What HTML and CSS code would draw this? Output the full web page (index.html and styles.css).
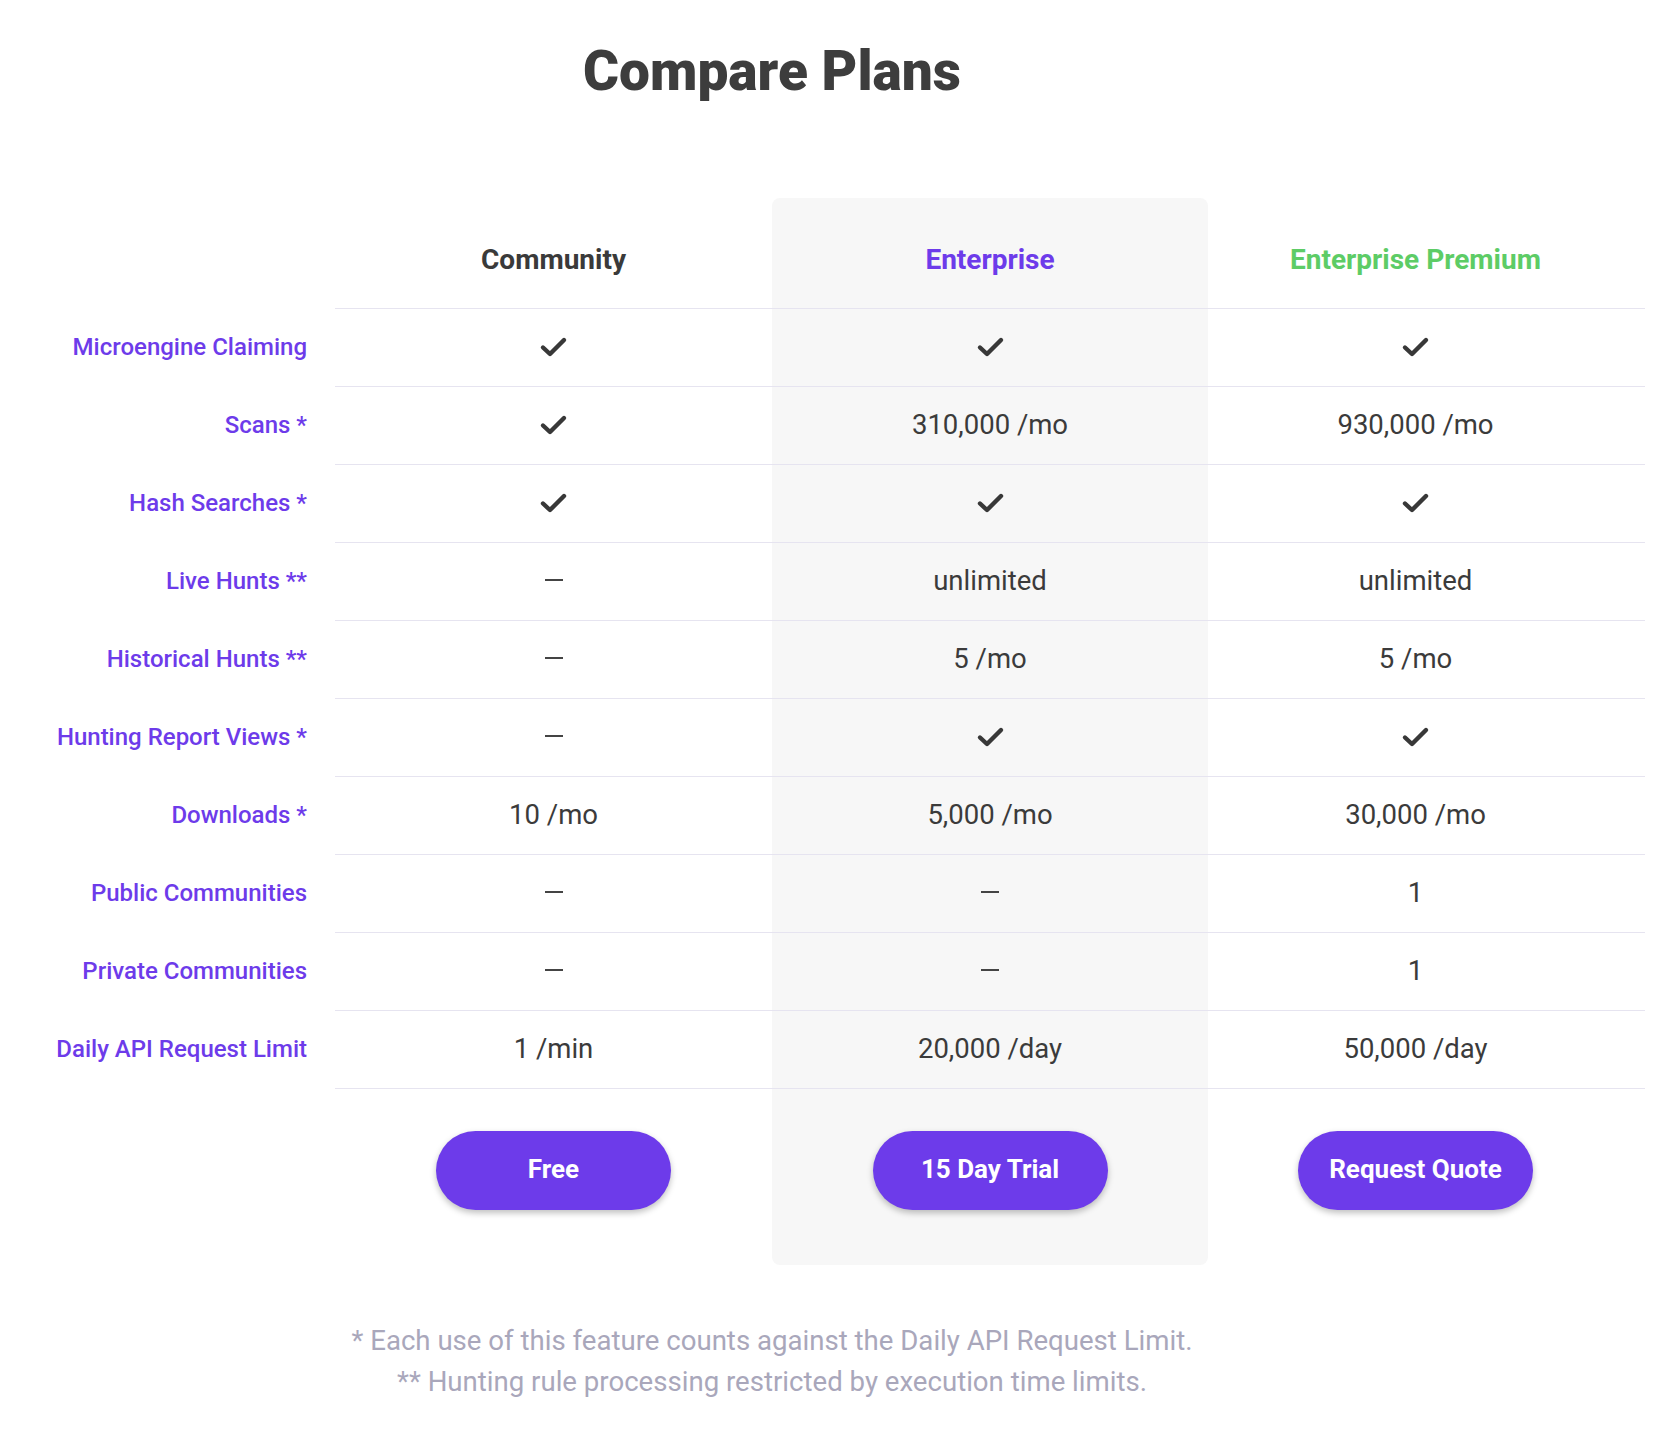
FILE: index.html
```html
<!DOCTYPE html>
<html lang="en">
<head>
<meta charset="utf-8">
<title>Compare Plans</title>
<link rel="stylesheet" href="styles.css">
</head>
<body>
<div class="page">
  <h1 class="title">Compare Plans</h1>

  <div class="plans">
    <div class="label head-label"></div>
    <div class="cell head">Community</div>
    <div class="cell head ent ent-top ent-title">Enterprise</div>
    <div class="cell head prem prem-title">Enterprise Premium</div>

    <div class="label">Microengine Claiming</div>
    <div class="cell"><svg class="check" viewBox="0 0 28 22"><polyline points="3.5,11.5 10.5,18 24.5,4"/></svg></div>
    <div class="cell ent"><svg class="check" viewBox="0 0 28 22"><polyline points="3.5,11.5 10.5,18 24.5,4"/></svg></div>
    <div class="cell prem"><svg class="check" viewBox="0 0 28 22"><polyline points="3.5,11.5 10.5,18 24.5,4"/></svg></div>

    <div class="label">Scans *</div>
    <div class="cell"><svg class="check" viewBox="0 0 28 22"><polyline points="3.5,11.5 10.5,18 24.5,4"/></svg></div>
    <div class="cell ent"><span class="val">310,000 /mo</span></div>
    <div class="cell prem"><span class="val">930,000 /mo</span></div>

    <div class="label">Hash Searches *</div>
    <div class="cell"><svg class="check" viewBox="0 0 28 22"><polyline points="3.5,11.5 10.5,18 24.5,4"/></svg></div>
    <div class="cell ent"><svg class="check" viewBox="0 0 28 22"><polyline points="3.5,11.5 10.5,18 24.5,4"/></svg></div>
    <div class="cell prem"><svg class="check" viewBox="0 0 28 22"><polyline points="3.5,11.5 10.5,18 24.5,4"/></svg></div>

    <div class="label">Live Hunts **</div>
    <div class="cell"><span class="dash"></span></div>
    <div class="cell ent"><span class="val">unlimited</span></div>
    <div class="cell prem"><span class="val">unlimited</span></div>

    <div class="label">Historical Hunts **</div>
    <div class="cell"><span class="dash"></span></div>
    <div class="cell ent"><span class="val">5 /mo</span></div>
    <div class="cell prem"><span class="val">5 /mo</span></div>

    <div class="label">Hunting Report Views *</div>
    <div class="cell"><span class="dash"></span></div>
    <div class="cell ent"><svg class="check" viewBox="0 0 28 22"><polyline points="3.5,11.5 10.5,18 24.5,4"/></svg></div>
    <div class="cell prem"><svg class="check" viewBox="0 0 28 22"><polyline points="3.5,11.5 10.5,18 24.5,4"/></svg></div>

    <div class="label">Downloads *</div>
    <div class="cell"><span class="val">10 /mo</span></div>
    <div class="cell ent"><span class="val">5,000 /mo</span></div>
    <div class="cell prem"><span class="val">30,000 /mo</span></div>

    <div class="label">Public Communities</div>
    <div class="cell"><span class="dash"></span></div>
    <div class="cell ent"><span class="dash"></span></div>
    <div class="cell prem"><span class="val">1</span></div>

    <div class="label">Private Communities</div>
    <div class="cell"><span class="dash"></span></div>
    <div class="cell ent"><span class="dash"></span></div>
    <div class="cell prem"><span class="val">1</span></div>

    <div class="label">Daily API Request Limit</div>
    <div class="cell"><span class="val">1 /min</span></div>
    <div class="cell ent"><span class="val">20,000 /day</span></div>
    <div class="cell prem"><span class="val">50,000 /day</span></div>

    <div class="label foot-label"></div>
    <div class="cell foot"><a class="btn" href="#">Free</a></div>
    <div class="cell foot ent ent-bottom"><a class="btn" href="#">15 Day Trial</a></div>
    <div class="cell foot prem"><a class="btn" href="#">Request Quote</a></div>
  </div>

  <div class="notes">
    <p>* Each use of this feature counts against the Daily API Request Limit.</p>
    <p>** Hunting rule processing restricted by execution time limits.</p>
  </div>
</div>
</body>
</html>
```

FILE: styles.css
```css
* {
  box-sizing: border-box;
}

html, body {
  margin: 0;
  padding: 0;
  background: #ffffff;
}

body {
  font-family: Roboto, "Liberation Sans", sans-serif;
  color: #3b3b3b;
}

.page {
  padding: 42px 0 40px 8px;
}

.title {
  width: 1528px;
  margin: 0;
  font-size: 55px;
  line-height: 58px;
  font-weight: 900;
  color: #3d3d3d;
  text-align: center;
}

.plans {
  margin-top: 98px;
  display: grid;
  grid-template-columns: 327px 437px 436px 437px;
}

.label {
  display: flex;
  align-items: center;
  justify-content: flex-end;
  padding-right: 28px;
  padding-bottom: 2px;
  height: 78px;
  font-size: 24px;
  font-weight: 500;
  color: #6d3bea;
  white-space: nowrap;
}

.head-label {
  height: 111px;
}

.foot-label {
  height: 176px;
}

.cell {
  display: flex;
  align-items: center;
  justify-content: center;
  height: 78px;
  border-bottom: 1px solid #e6e4f0;
  font-size: 27.5px;
  color: #3b3b3b;
  white-space: nowrap;
}

.val {
  display: block;
  margin-top: -2px;
}

.ent {
  background: #f7f7f7;
}

.prem {
  padding-right: 22px;
}

.head {
  height: 111px;
  align-items: flex-start;
  padding-top: 48px;
  font-size: 28px;
  line-height: 28px;
  font-weight: 700;
  color: #3a3a3a;
}

.ent-top {
  border-radius: 8px 8px 0 0;
}

.ent-title {
  color: #6d3bea;
}

.prem-title {
  color: #5dcc66;
}

.foot {
  height: 176px;
  border-bottom: none;
  align-items: flex-start;
  padding-top: 42px;
}

.ent-bottom {
  border-radius: 0 0 8px 8px;
}

.check {
  width: 29px;
  height: 22px;
  display: block;
  margin-top: -1px;
}

.check polyline {
  fill: none;
  stroke: #383838;
  stroke-width: 4.4;
  stroke-linecap: round;
  stroke-linejoin: round;
}

.dash {
  display: block;
  width: 18px;
  height: 2px;
  margin-top: -3px;
  background: #444444;
}

.btn {
  display: flex;
  align-items: center;
  justify-content: center;
  width: 235px;
  height: 79px;
  padding-bottom: 3px;
  border-radius: 40px;
  background: #6d3bea;
  color: #ffffff;
  font-size: 26px;
  font-weight: 700;
  text-decoration: none;
  box-shadow: 0 3px 6px rgba(0, 0, 0, 0.25);
}

.notes {
  width: 1528px;
  margin-top: 55px;
  text-align: center;
  font-size: 27.6px;
  line-height: 41px;
  color: #a9a7bb;
}

.notes p {
  margin: 0;
}
```
